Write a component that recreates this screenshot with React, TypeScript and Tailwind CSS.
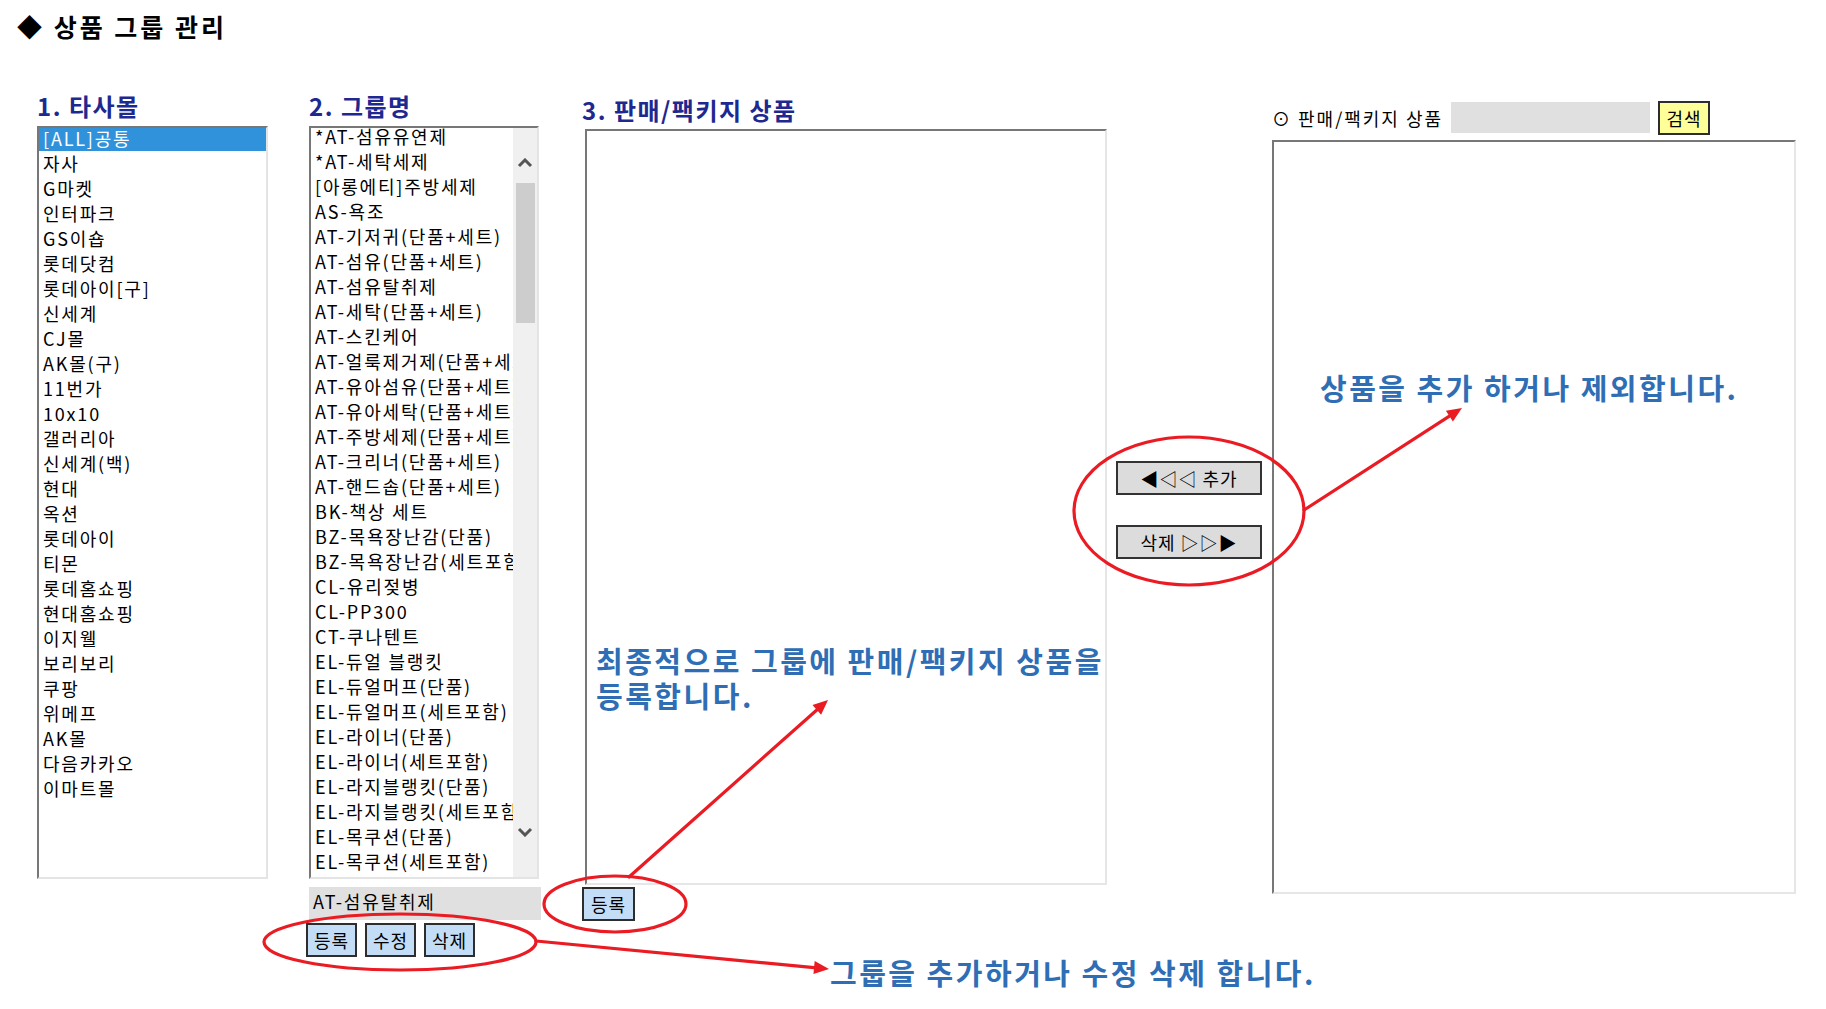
import React from "react";

const malls = [
  "[ALL]공통", "자사", "G마켓", "인터파크", "GS이숍", "롯데닷컴", "롯데아이[구]", "신세계", "CJ몰",
  "AK몰(구)", "11번가", "10x10", "갤러리아", "신세계(백)", "현대", "옥션", "롯데아이", "티몬",
  "롯데홈쇼핑", "현대홈쇼핑", "이지웰", "보리보리", "쿠팡", "위메프", "AK몰", "다음카카오", "이마트몰",
];

const groups = [
  "*AT-섬유유연제", "*AT-세탁세제", "[아롱에티]주방세제", "AS-욕조", "AT-기저귀(단품+세트)",
  "AT-섬유(단품+세트)", "AT-섬유탈취제", "AT-세탁(단품+세트)", "AT-스킨케어", "AT-얼룩제거제(단품+세트)",
  "AT-유아섬유(단품+세트)", "AT-유아세탁(단품+세트)", "AT-주방세제(단품+세트)", "AT-크리너(단품+세트)",
  "AT-핸드솝(단품+세트)", "BK-책상 세트", "BZ-목욕장난감(단품)", "BZ-목욕장난감(세트포함)", "CL-유리젖병",
  "CL-PP300", "CT-쿠나텐트", "EL-듀얼 블랭킷", "EL-듀얼머프(단품)", "EL-듀얼머프(세트포함)",
  "EL-라이너(단품)", "EL-라이너(세트포함)", "EL-라지블랭킷(단품)", "EL-라지블랭킷(세트포함)",
  "EL-목쿠션(단품)", "EL-목쿠션(세트포함)",
];

const RED = "#ea1b23";

function Arrow({ x1, y1, x2, y2 }: { x1: number; y1: number; x2: number; y2: number }) {
  const ang = Math.atan2(y2 - y1, x2 - x1);
  const L = 15;
  const W = 6.5;
  const bx = x2 - L * Math.cos(ang);
  const by = y2 - L * Math.sin(ang);
  const px = -Math.sin(ang) * W;
  const py = Math.cos(ang) * W;
  return (
    <g>
      <line x1={x1} y1={y1} x2={bx} y2={by} stroke={RED} strokeWidth={3.2} strokeLinecap="round" />
      <polygon points={`${x2},${y2} ${bx + px},${by + py} ${bx - px},${by - py}`} fill={RED} />
    </g>
  );
}

function Heading({ children, tall }: { children: React.ReactNode; tall?: boolean }) {
  return (
    <div
      className={`${tall ? "h-[37px] leading-[36px]" : "h-[34px] leading-[28px]"} text-[24px] tracking-[1.5px] font-bold text-[#1d2890] whitespace-nowrap`}
    >
      {children}
    </div>
  );
}

function Btn({ children, w = "w-[51px]" }: { children: React.ReactNode; w?: string }) {
  return (
    <div
      className={`${w} h-[34px] flex items-center justify-center bg-[#c4ddf6] border-2 border-[#2d2d2d] text-[18px] leading-none tracking-[1px] text-black`}
    >
      {children}
    </div>
  );
}

export default function App() {
  return (
    <div className="relative w-[1826px] h-[1009px] bg-white overflow-hidden font-['Noto_Sans_CJK_KR',sans-serif] text-black">
      {/* Title */}
      <div className="h-[92px] pl-[17px] pt-[10px] text-[25px] leading-[32px] tracking-[3px] font-bold whitespace-nowrap">
        ◆ 상품 그룹 관리
      </div>

      <div className="flex items-start pl-[37px]">
        {/* Column 1 */}
        <div className="flex flex-col w-[231px]">
          <Heading>1. 타사몰</Heading>
          <div className="h-[753px] border-2 border-t-[#777] border-l-[#777] border-r-[#e4e4e4] border-b-[#e4e4e4] overflow-hidden bg-white">
            <div className="-mt-[2px]">
              {malls.map((m, i) => (
                <div
                  key={m}
                  className={`h-[25px] leading-[25px] px-[4px] text-[18px] tracking-[1.8px] whitespace-nowrap ${
                    i === 0 ? "bg-[#3192dc] text-white" : ""
                  }`}
                >
                  {m}
                </div>
              ))}
            </div>
          </div>
        </div>

        {/* Column 2 */}
        <div className="ml-[41px] flex flex-col w-[232px]">
          <Heading>2. 그룹명</Heading>
          <div className="w-[230px] h-[753px] flex border-2 border-t-[#777] border-l-[#777] border-r-[#e4e4e4] border-b-[#e4e4e4] overflow-hidden bg-white">
            <div className="flex-1 overflow-hidden -mt-[4px]">
              {groups.map((g) => (
                <div key={g} className="h-[25px] leading-[25px] px-[4px] text-[18px] tracking-[1.8px] whitespace-nowrap overflow-hidden">
                  {g}
                </div>
              ))}
            </div>
            <div className="w-[24px] bg-[#f0f0f0] flex flex-col items-center">
              <div className="h-[52px] w-full flex items-center justify-center pt-[18px]">
                <svg width="16" height="10" viewBox="0 0 16 10">
                  <path d="M2 8 L8 2 L14 8" fill="none" stroke="#555" strokeWidth="3" />
                </svg>
              </div>
              <div className="w-[19px] h-[140px] bg-[#cdcdcd] mt-[3px]" />
              <div className="flex-1" />
              <div className="h-[60px] w-full flex items-start justify-center pt-[10px]">
                <svg width="16" height="10" viewBox="0 0 16 10">
                  <path d="M2 2 L8 8 L14 2" fill="none" stroke="#555" strokeWidth="3" />
                </svg>
              </div>
            </div>
          </div>
          <div className="mt-[8px] h-[33px] bg-[#e0e0e0] px-[4px] text-[18px] tracking-[1.8px] leading-[28px] whitespace-nowrap">
            AT-섬유탈취제
          </div>
          <div className="mt-[3px] -ml-[3px] flex gap-[8px]">
            <Btn>등록</Btn>
            <Btn>수정</Btn>
            <Btn>삭제</Btn>
          </div>
        </div>

        {/* Column 3 */}
        <div className="ml-[41px] flex flex-col w-[525px]">
          <Heading tall>3. 판매/팩키지 상품</Heading>
          <div className="ml-[3px] w-[522px] h-[756px] border-2 border-t-[#777] border-l-[#777] border-r-[#e6e6e6] border-b-[#e6e6e6] bg-white" />
          <div className="mt-[2px]">
            <Btn w="w-[53px]">등록</Btn>
          </div>
        </div>

        {/* Middle buttons */}
        <div className="ml-[9px] w-[146px] pt-[369px] flex flex-col gap-[30px]">
          <div className="h-[34px] flex items-center justify-center bg-[#dcdcdc] border-2 border-[#333] text-[18px] leading-none tracking-[1px] whitespace-nowrap font-['Noto_Sans_CJK_KR','DejaVu_Sans',sans-serif]">
            ◀◁◁ 추가
          </div>
          <div className="h-[34px] flex items-center justify-center bg-[#dcdcdc] border-2 border-[#333] text-[18px] leading-none tracking-[1px] whitespace-nowrap font-['Noto_Sans_CJK_KR','DejaVu_Sans',sans-serif]">
            삭제 ▷▷▶
          </div>
        </div>

        {/* Column 4 */}
        <div className="ml-[10px] w-[524px] pt-[9px] flex flex-col">
          <div className="h-[33px] flex items-center">
            <span className="text-[18px] leading-none tracking-[2px] whitespace-nowrap">⊙ 판매/팩키지 상품</span>
            <div className="ml-[8px] w-[199px] h-[31px] bg-[#e0e0e0]" />
            <div className="ml-[8px] w-[52px] h-[34px] flex items-center justify-center bg-[#ffff99] border-2 border-[#2d2d2d] text-[18px] leading-none tracking-[1px]">
              검색
            </div>
          </div>
          <div className="mt-[6px] h-[754px] border-2 border-t-[#777] border-l-[#777] border-r-[#e6e6e6] border-b-[#e6e6e6] bg-white" />
        </div>
      </div>

      {/* Annotation overlay */}
      <svg className="absolute inset-0 pointer-events-none" width="1826" height="1009" viewBox="0 0 1826 1009">
        <ellipse cx="1189" cy="511" rx="115" ry="74" fill="none" stroke={RED} strokeWidth="3.2" />
        <ellipse cx="615" cy="904" rx="71" ry="28" fill="none" stroke={RED} strokeWidth="3.2" />
        <ellipse cx="400" cy="942" rx="136" ry="28" fill="none" stroke={RED} strokeWidth="3.2" />
        <Arrow x1={1304} x2={1462} y1={510} y2={408} />
        <Arrow x1={629} y1={877} x2={828} y2={700} />
        <Arrow x1={536} y1={941} x2={829} y2={969} />
      </svg>

      <div className="absolute left-[1320px] top-[370px] text-[29px] leading-[35px] tracking-[2.5px] font-bold text-[#2f6eb4] whitespace-nowrap">
        상품을 추가 하거나 제외합니다.
      </div>
      <div className="absolute left-[596px] top-[643px] text-[29px] leading-[35px] tracking-[2.5px] font-bold text-[#2f6eb4] whitespace-nowrap">
        최종적으로 그룹에 판매/팩키지 상품을
        <br />
        등록합니다.
      </div>
      <div className="absolute left-[830px] top-[955px] text-[29px] leading-[35px] tracking-[2.5px] font-bold text-[#2f6eb4] whitespace-nowrap">
        그룹을 추가하거나 수정 삭제 합니다.
      </div>
    </div>
  );
}
